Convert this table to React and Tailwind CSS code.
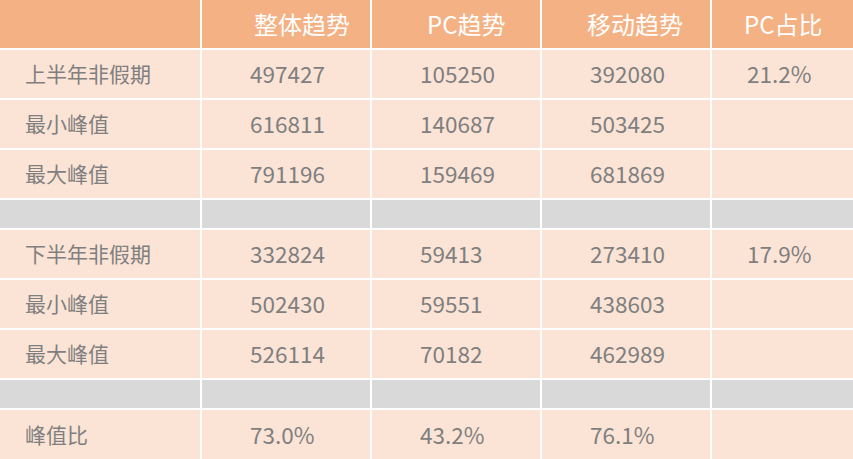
import React from 'react';

const groups = [
  [
    { label: '上半年非假期', total: '497427', pc: '105250', mobile: '392080', ratio: '21.2%' },
    { label: '最小峰值', total: '616811', pc: '140687', mobile: '503425', ratio: '' },
    { label: '最大峰值', total: '791196', pc: '159469', mobile: '681869', ratio: '' },
  ],
  [
    { label: '下半年非假期', total: '332824', pc: '59413', mobile: '273410', ratio: '17.9%' },
    { label: '最小峰值', total: '502430', pc: '59551', mobile: '438603', ratio: '' },
    { label: '最大峰值', total: '526114', pc: '70182', mobile: '462989', ratio: '' },
  ],
];

const font = { fontFamily: '"Noto Sans CJK SC", "Noto Sans", sans-serif' };

const DataRow = ({ row, last }) => (
  <>
    <div className={`${last ? 'h-[49px]' : 'h-[48px]'} bg-[#fbe4d6] flex items-center pl-[25px] text-[21px] text-[#7f7f7f]`}>
      {row.label}
    </div>
    <div className="bg-[#fbe4d6] flex items-center pl-[48px] text-[22.5px] text-[#7f7f7f]">{row.total}</div>
    <div className="bg-[#fbe4d6] flex items-center pl-[48px] text-[22.5px] text-[#7f7f7f]">{row.pc}</div>
    <div className="bg-[#fbe4d6] flex items-center pl-[48px] text-[22.5px] text-[#7f7f7f]">{row.mobile}</div>
    <div className="bg-[#fbe4d6] flex items-center pl-[35px] text-[22.5px] text-[#7f7f7f]">{row.ratio}</div>
  </>
);

const GrayRow = () => (
  <>
    <div className="h-[28px] bg-[#d9d9d9]" />
    <div className="bg-[#d9d9d9]" />
    <div className="bg-[#d9d9d9]" />
    <div className="bg-[#d9d9d9]" />
    <div className="bg-[#d9d9d9]" />
  </>
);

export default function App() {
  return (
    <div className="w-[853px] h-[459px] overflow-hidden bg-white" style={font}>
      <div className="grid grid-cols-[200px_168px_168px_168px_1fr] gap-[2px] bg-white">
        {/* header */}
        <div className="h-[48px] bg-[#f4b183]" />
        <div className="bg-[#f4b183] flex items-center pl-[52px] text-[24px] text-white">整体趋势</div>
        <div className="bg-[#f4b183] flex items-center pl-[55px] text-[24px] text-white">PC趋势</div>
        <div className="bg-[#f4b183] flex items-center pl-[45px] text-[24px] text-white">移动趋势</div>
        <div className="bg-[#f4b183] flex items-center pl-[32px] text-[24px] text-white">PC占比</div>

        {groups[0].map((r, i) => <DataRow key={'a' + i} row={r} />)}
        <GrayRow />
        {groups[1].map((r, i) => <DataRow key={'b' + i} row={r} />)}
        <GrayRow />
        <DataRow row={{ label: '峰值比', total: '73.0%', pc: '43.2%', mobile: '76.1%', ratio: '' }} last />
      </div>
    </div>
  );
}
